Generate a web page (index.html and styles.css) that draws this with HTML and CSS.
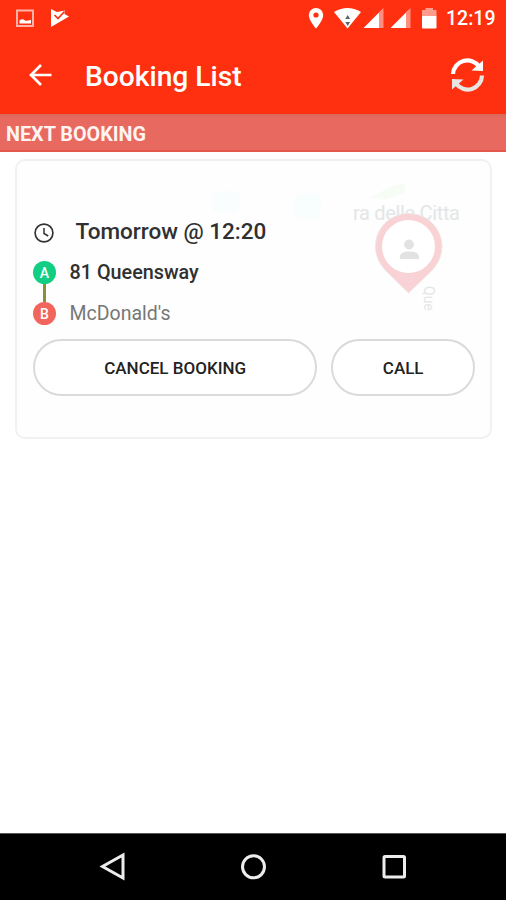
FILE: index.html
```html
<!DOCTYPE html>
<html lang="en">
<head>
<meta charset="utf-8">
<title>Booking List</title>
<link rel="stylesheet" href="styles.css">
</head>
<body>
<div class="screen">
  <header class="top">
    <div class="status">
      <svg class="status-left" width="56" height="24" viewBox="0 0 56 24">
        <rect x="2" y="2.500" width="16" height="15.500" fill="none" stroke="#ffb3a8" stroke-width="2"/>
        <path d="M4.500 15.500v-3c2-2 4-1.500 5.500 0 2 1 4-1 6-.500v3.500z" fill="#fff"/>
        <path d="M36 1l6 3 8-1.500-.500 3.500 4.500 2.500L36 19z" fill="#fff"/>
        <path d="M39.500 7l3.500 3.500L49.500 3.500" fill="none" stroke="#ff3010" stroke-width="1.700"/>
      </svg>
      <svg class="status-right" width="132" height="26" viewBox="308 4 132 26">
        <path d="M316 8a7.200 7.200 0 0 0-7.200 7.200c0 5.200 7.200 13.300 7.200 13.300s7.200-8.100 7.200-13.300A7.200 7.200 0 0 0 316 8z" fill="#fff"/>
        <circle cx="316" cy="15" r="2.600" fill="#ff3010"/>
        <path d="M334 12Q347.500 4 361 12L347.500 28.500z" fill="#fff"/>
        <path d="M347.700 15l2.400 4h-4.800zM347.700 26l2.400-4h-4.800z" fill="#596264"/>
        <path d="M379 12l4.500-4v20H379zM406 12l4.500-4v20H406z" fill="#ff8e7e"/>
        <path d="M379 12.500V28h-15.500zM406 12.500V28h-15.500z" fill="#fff"/>
        <path d="M422 17v-7h3.500V8h7.500v2h3.500v7z" fill="#ff9b8d"/>
        <rect x="422" y="16" width="14.500" height="12.500" rx="1" fill="#fff"/>
      </svg>
      <span class="time">12:19</span>
    </div>
    <div class="appbar">
      <svg class="back" width="26" height="26" viewBox="0 0 26 26"><path d="M24.500 13H4M14 3L4 13l10 10" fill="none" stroke="#fff" stroke-width="2.700"/></svg>
      <h1 class="title">Booking List</h1>
      <svg class="refresh" width="36" height="36" viewBox="449 57 36 36">
        <path d="M453 74A14.300 14.300 0 0 1 479 66.500" fill="none" stroke="#fff" stroke-width="4.200"/>
        <path d="M483 60.500v10.500l-11.500-.500z" fill="#fff"/>
        <path d="M482 75.500A14.300 14.300 0 0 1 456 83.500" fill="none" stroke="#e9e5e2" stroke-width="4.200"/>
        <path d="M452 89.500V79l11.500.500z" fill="#e9e5e2"/>
      </svg>
    </div>
  </header>
  <h2 class="section">NEXT BOOKING</h2>
  <main class="content">
    <article class="card">
      <svg class="map" width="475" height="278" viewBox="16 160 475 278">
        <rect x="212" y="191" width="28" height="22" rx="8" fill="#f9fdfd"/>
        <rect x="294" y="193" width="27" height="26" rx="8" fill="#f8fdfd"/>
        <path d="M371 198l18-11 17-4-2 10-18 6z" fill="#f7fcf5"/>
        <text x="353" y="220" font-size="20" textLength="107" class="map-label">ra delle Citta</text>
        <path d="M408.500 213.500c-18.500 0-33 14.800-33 33 0 9 3.500 17 10.500 24.500l22.500 22 23-22c7-7.500 10.500-15.500 10.500-24.500 0-18.200-15-33-33.500-33z" fill="#f8d2d4" stroke="#eee9e7"/>
        <circle cx="408.500" cy="246.500" r="26.500" fill="#fff"/>
        <circle cx="409" cy="244.500" r="4.900" fill="#e2e2e2"/>
        <path d="M400 259v-2.500c0-3.500 4-5 9.200-5s9.800 1.500 9.800 5v2.500z" fill="#e2e2e2"/>
        <text transform="translate(424 286) rotate(90)" font-size="14" class="map-label">Que</text>
      </svg>
      <div class="details">
        <div class="row when">
          <svg class="clock" width="22" height="22" viewBox="0 0 22 22" fill="none" stroke="#333"><circle cx="11" cy="11" r="8.900" stroke-width="1.700"/><path d="M11 6v5.500l4.200 2.500" stroke-width="1.500"/></svg>
          <span>Tomorrow @ 12:20</span>
        </div>
        <div class="row from"><b class="stop a">A</b><span>81 Queensway</span></div>
        <i class="link"></i>
        <div class="row to"><b class="stop b">B</b><span>McDonald's</span></div>
        <div class="actions">
          <button class="cancel">CANCEL BOOKING</button>
          <button class="call">CALL</button>
        </div>
      </div>
    </article>
  </main>
  <nav class="nav">
    <svg width="506" height="66" viewBox="0 834 506 66" fill="none" stroke="#ededed" stroke-width="3">
      <path d="M123 855v23l-20.500-11.500z"/>
      <circle cx="253.500" cy="866.800" r="11"/>
      <rect x="384" y="856.500" width="20.500" height="20.500" rx="1"/>
    </svg>
  </nav>
</div>
</body>
</html>
```
FILE: styles.css
```css
* { box-sizing: border-box; }
body { margin: 0; font-family: Roboto, "Liberation Sans", sans-serif; background: #fff; }
.screen { width: 506px; height: 900px; display: flex; flex-direction: column; }
.top { height: 114px; background: #ff3010; color: #fff; }
.status { height: 38px; display: flex; padding: 0 11px 0 15px; }
.status-left { margin-top: 8px; }
.status-right { margin: 4px 0 0 auto; }
.time { margin: 7px 0 0 6px; font-size: 19.5px; line-height: 24px; font-weight: 500; width: 49px; white-space: nowrap; }
.appbar { height: 76px; display: flex; align-items: center; padding: 0 21px 2px 27px; }
.title { margin: 4px auto 0 32px; font-size: 28.2px; line-height: 34px; font-weight: 500; white-space: nowrap; }
.section { margin: 0; height: 38px; padding: 2px 0 0 6px; font-size: 19.8px; line-height: 38px; font-weight: 700; color: #fff4f2; background: linear-gradient(#d8685a 0, #e8695f 5px, #e8695f 36px, #e4584c 36px); white-space: nowrap; }
.content { flex: 1; padding: 7px 14px 0 15px; }
.card { position: relative; height: 280px; border: 2px solid #f3f1ef; border-radius: 10px; background: #fdfefd; overflow: hidden; }
.map { position: absolute; left: -1px; top: -1px; }
.map-label { fill: #e3e6e7; }
.details { position: relative; padding: 54px 15px 0 15px; color: #303030; }
.row { display: flex; align-items: center; white-space: nowrap; }
.when { height: 32px; font-size: 22.5px; font-weight: 500; }
.clock { margin: 3px 20.5px 0 1px; }
.from, .to { height: 24px; font-size: 19.8px; gap: 13.5px; }
.from { margin-top: 13px; font-weight: 500; }
.to { margin-top: -1px; color: #777; font-size: 19.5px; }
.stop { width: 23px; height: 23px; margin-left: 1px; border-radius: 50%; text-align: center; font-size: 14px; line-height: 24px; font-weight: 500; color: #fff; }
.a { background: #11ce83; }
.b { background: #f1655d; }
.link { display: block; width: 3px; height: 18px; margin-left: 11px; background: linear-gradient(90deg, #55a83b, #c07830); }
.actions { display: flex; gap: 14px; margin: 14px 0 0 1px; }
button { height: 57px; padding: 0; border: 2px solid #dadada; border-radius: 29px; background: #fff; font-family: inherit; font-size: 17px; font-weight: 500; color: #222; white-space: nowrap; }
.cancel { width: 285px; }
.call { width: 144px; }
.nav { height: 67px; background: #000; border-top: 1px solid #555; }
.nav svg { display: block; }
```
